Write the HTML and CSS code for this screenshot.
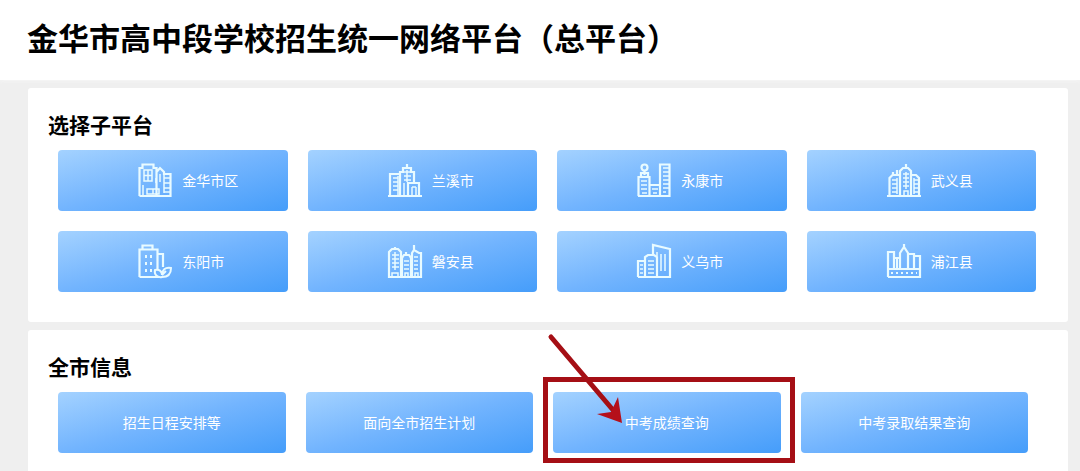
FILE: index.html
```html
<!DOCTYPE html>
<html lang="zh-CN">

<head>
  <meta charset="UTF-8">
  <meta name="viewport" content="width=device-width, initial-scale=1">
  <title>金华市高中段学校招生统一网络平台（总平台）</title>
  <link rel="stylesheet" href="styles.css">
</head>

<body>
  <header class="header">
    <h1>金华市高中段学校招生统一网络平台（总平台）</h1>
  </header>

  <main class="main">
    <section class="panel">
      <h2>选择子平台</h2>
      <div class="grid">
        <button class="card city" type="button">
          <svg class="icon" viewBox="0 0 34 34" aria-hidden="true">
            <path d="M1.500 33V5h3V1.500h11V5h3v28M18.500 15V9l3.500-4 4 4v2h6.500v22H1.500" />
            <path d="M6 7h8v11H6zM10 7v11M6 12.500h8M5 22v11M9 31v-5h12v5zM15 26v5M18 15v5M22 11v8M32 15h-6M32 20h-6M32 25h-6M32 29h-6M26 12v18" />
          </svg>
          <span>金华市区</span>
        </button>
        <button class="card city" type="button">
          <svg class="icon" viewBox="0 0 34 34" aria-hidden="true">
            <path d="M0 33h34M2 33V11h10M12 33V9h3V5h8v4h3v11M19 1v4M20 33V20h11v13" />
            <path d="M5 15h5M5 19h5M5 23h5M5 27h5M10 13v19M16 9h7M16 13h7M16 17h7M19 7v12M16 20v12M24 24v9M28 24v9M24 24h4" />
          </svg>
          <span>兰溪市</span>
        </button>
        <button class="card city" type="button">
          <svg class="icon" viewBox="0 0 34 34" aria-hidden="true">
            <circle cx="7.500" cy="4.500" r="3" />
            <path d="M7.500 8v4M4 14v-4h7v4M1.500 33V14h11v19M13 22h9M23 33V1.500h9.500V33zM1 33h32" />
            <path class="thin" d="M4 18h6M4 22h6M4 26h6M5 30h5M15 26h6M16 30h4M26 5h6M26 9h6M26 13h6M26 17h6M26 21h6M26 25h6M26 29h3" />
          </svg>
          <span>永康市</span>
        </button>
        <button class="card city" type="button">
          <svg class="icon" viewBox="0 0 34 34" aria-hidden="true">
            <path d="M0 33h34M2.500 33V15l3-3h7M6 12V9M10 12V7M13 33V8l3-3h5l3 3v25M19 1v4M24 12h5l3 3v18" />
            <path d="M5 17h5M5 21h5M5 25h5M5 29h5M10 15v16M16 11h6M16 15h6M16 19h6M16 23h6M19 9v17M17 33v-5h4v5M27 17h4M27 21h4M27 25h4M27 29h4M27 15v16" />
          </svg>
          <span>武义县</span>
        </button>
        <button class="card city" type="button">
          <svg class="icon" viewBox="0 0 34 34" aria-hidden="true">
            <path d="M4.500 5V1.500h10V5M1.500 33V5.500h18V25M1.500 33H21M20 10h5v13" />
            <path class="bold" d="M24 33c-5 1-8-3-7-7 4-1 7 1 7 5 0-5 3-8 9-7 0 6-3 9-9 9zM24 31l4-4" />
            <path class="bold" d="M8 11v3M13 11v3M8 18v3M13 18v3M8 25v3M13 25v3" />
          </svg>
          <span>东阳市</span>
        </button>
        <button class="card city" type="button">
          <svg class="icon" viewBox="0 0 34 34" aria-hidden="true">
            <path d="M1 33V8l3-3h6l3 3v25zM7 3v2M14 33V14l2-3h5l2 3v19zM18 8v3M24 33V9l2-3 5 3h2v24zM26 1v5M1 33h32" />
            <path d="M4 11h7M4 15h7M4 19h7M4 23h7M7 8v18M4 33v-4h6v4M16 17h5M16 21h5M16 25h5M17 33v-4h3v4M26 13h4M26 17h4M26 21h4M26 25h4M27 33v-4h3v4" />
          </svg>
          <span>磐安县</span>
        </button>
        <button class="card city" type="button">
          <svg class="icon" viewBox="0 0 34 34" aria-hidden="true">
            <path d="M1 33V17h7M8 33V13l3-2h6l3 2v20M16 11V1l17 4v28H1" />
            <path d="M3 21h3M3 25h3M3 29h3M11 17h6M11 21h6M11 25h6M11 29h6M20 8v4M24 10v17M28 10v17" />
          </svg>
          <span>义乌市</span>
        </button>
        <button class="card city" type="button">
          <svg class="icon" viewBox="0 0 34 34" aria-hidden="true">
            <path d="M1 33V8h6v17M7 14h6M13 25V9l4-6 4 6v16M17 0v4M21 10h6v15M27 12h6v21H1M1 25h32" />
            <path class="bold" d="M10 15v10M4 29h2M9 29h2M14 29h2M19 29h2M24 29h2M29 29h1" />
          </svg>
          <span>浦江县</span>
        </button>
      </div>
    </section>

    <section class="panel">
      <h2>全市信息</h2>
      <div class="grid info">
        <button class="card" type="button">招生日程安排等</button>
        <button class="card" type="button">面向全市招生计划</button>
        <div class="marked">
          <button class="card" type="button">中考成绩查询</button>
          <svg class="arrow" viewBox="0 0 90 100" aria-hidden="true">
            <path class="line" d="M8 5L70 78" />
            <path class="head" d="M79 91L54 82L68 80L75 65z" />
          </svg>
        </div>
        <button class="card" type="button">中考录取结果查询</button>
      </div>
    </section>
  </main>
</body>

</html>
```
FILE: styles.css
```css
* {
  box-sizing: border-box;
}

body {
  margin: 0;
  background-color: #efefef;
  color: #000;
  font-family: "Liberation Sans", "Noto Sans CJK SC", sans-serif;
}

h1, h2 {
  margin: 0;
  font-weight: bold;
}

.header {
  padding: 16px 27px;
  background-color: #fff;
  box-shadow: 0 1px 4px #f6f6f6;
}

.header h1 {
  font-size: 31px;
  line-height: 48px;
}

.main {
  display: flex;
  flex-direction: column;
  gap: 8px;
  padding: 8px 12px 0 28px;
}

.panel {
  padding: 20px 32px 30px 20px;
  background-color: #fff;
  border-radius: 3px;
}

.panel h2 {
  font-size: 21px;
  line-height: 36px;
}

.grid {
  display: grid;
  grid-template-columns: repeat(4, 1fr);
  gap: 20px;
  margin-top: 6px;
  margin-left: 10px;
}

.info {
  margin-right: 8px;
}

.card {
  width: 100%;
  height: 61px;
  padding: 0 0 2px;
  border: none;
  border-radius: 4px;
  background: linear-gradient(to bottom right, #a4d2ff, #72b4fe 50%, #459dfa);
  color: #fff;
  font-family: inherit;
  font-size: 14px;
  cursor: pointer;
}

.city {
  display: flex;
  align-items: center;
  gap: 10px;
  padding-left: 35%;
}

.icon {
  width: 34px;
  height: 34px;
  fill: none;
  stroke: #e9fbff;
  stroke-width: 2.2;
  overflow: visible;
}

/* windows and other details are thinner than the outline */
.icon path:last-child {
  stroke-width: 1.5;
}

.icon path.bold {
  stroke-width: 2;
}

.marked {
  position: relative;
}

/* red frame around the score query button */
.marked::after {
  content: "";
  position: absolute;
  top: -15px;
  right: -14px;
  bottom: -10px;
  left: -10px;
  border: 5px solid #a50f15;
  pointer-events: none;
}

.arrow {
  position: absolute;
  top: -60px;
  left: -10px;
  z-index: 1;
  width: 90px;
  height: 100px;
  pointer-events: none;
}

.arrow .line {
  stroke: #a50f15;
  stroke-width: 5;
  stroke-linecap: round;
}

.arrow .head {
  fill: #b5101a;
}
```
